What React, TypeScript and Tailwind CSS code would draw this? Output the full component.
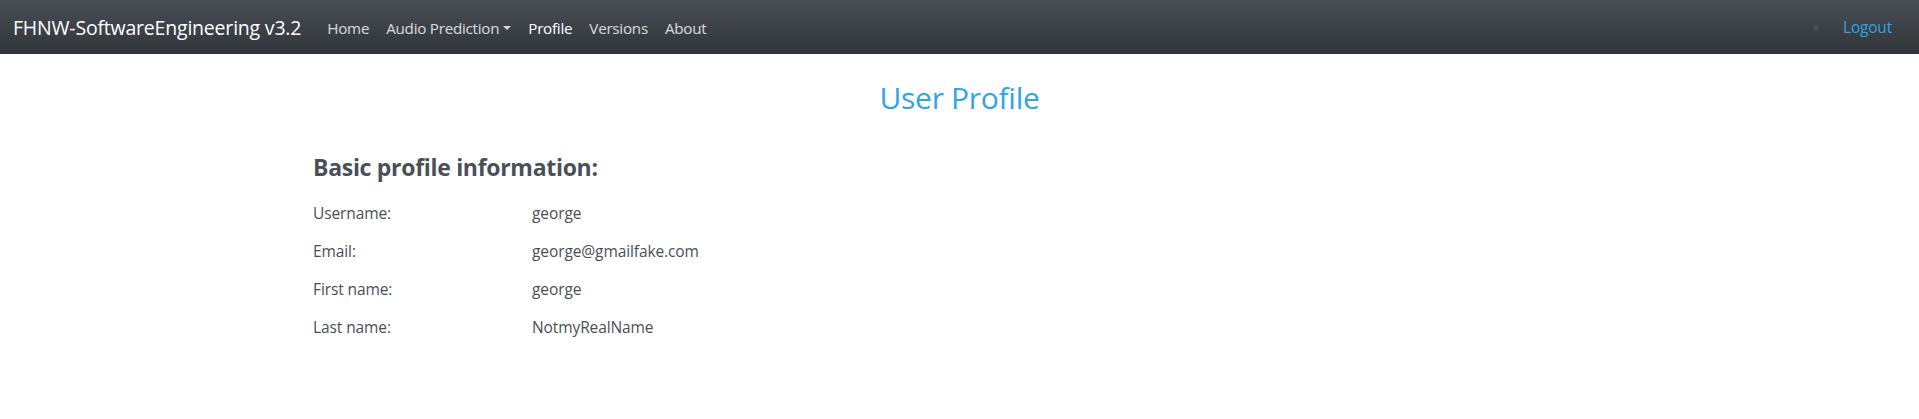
import React from "react";

export default function App() {
  const rows: [string, string][] = [
    ["Username:", "george"],
    ["Email:", "george@gmailfake.com"],
    ["First name:", "george"],
    ["Last name:", "NotmyRealName"],
  ];
  return (
    <div className="min-h-[419px] bg-white text-[#495057]" style={{ fontFamily: '"Open Sans", "Noto Sans", sans-serif' }}>
      <nav className="flex h-[54px] items-center bg-[linear-gradient(#484e55,#3a3f44_60%,#313539)] pl-[13px] pr-[27px] pt-[2px]">
        <span className="mr-[26px] text-[19.5px] leading-none text-white tracking-[-0.2px]">FHNW-SoftwareEngineering v3.2</span>
        <div className="flex items-center gap-[17px] text-[15.2px] tracking-[-0.25px]">
          <span className="text-white/80">Home</span>
          <span className="flex items-center text-white/80">
            Audio Prediction
            <span className="ml-[4px] inline-block h-0 w-0 border-x-[4px] border-t-[4px] border-x-transparent border-t-white/80" />
          </span>
          <span className="text-white">Profile</span>
          <span className="text-white/80">Versions</span>
          <span className="text-white/80">About</span>
        </div>
        <div className="ml-auto flex items-center">
          <span className="mr-[24px] h-[6px] w-[6px] rounded-full bg-[#4a4f56]" />
          <span className="text-[15.5px] text-[#2fa4e7] tracking-[-0.2px]">Logout</span>
        </div>
      </nav>
      <h1 className="mt-[26px] text-center text-[30px] leading-[36px] text-[#2fa4e7] tracking-[-0.3px]">User Profile</h1>
      <div className="pl-[313px] pt-[37px]">
        <h4 className="text-[23px] font-bold leading-[28px] tracking-[-0.3px]">Basic profile information:</h4>
        <div className="mt-[14px] flex flex-col">
          {rows.map(([k, v]) => (
            <div key={k} className="flex h-[38px] items-center text-[15.5px] tracking-[-0.1px]">
              <span className="w-[219px]">{k}</span>
              <span>{v}</span>
            </div>
          ))}
        </div>
      </div>
    </div>
  );
}
